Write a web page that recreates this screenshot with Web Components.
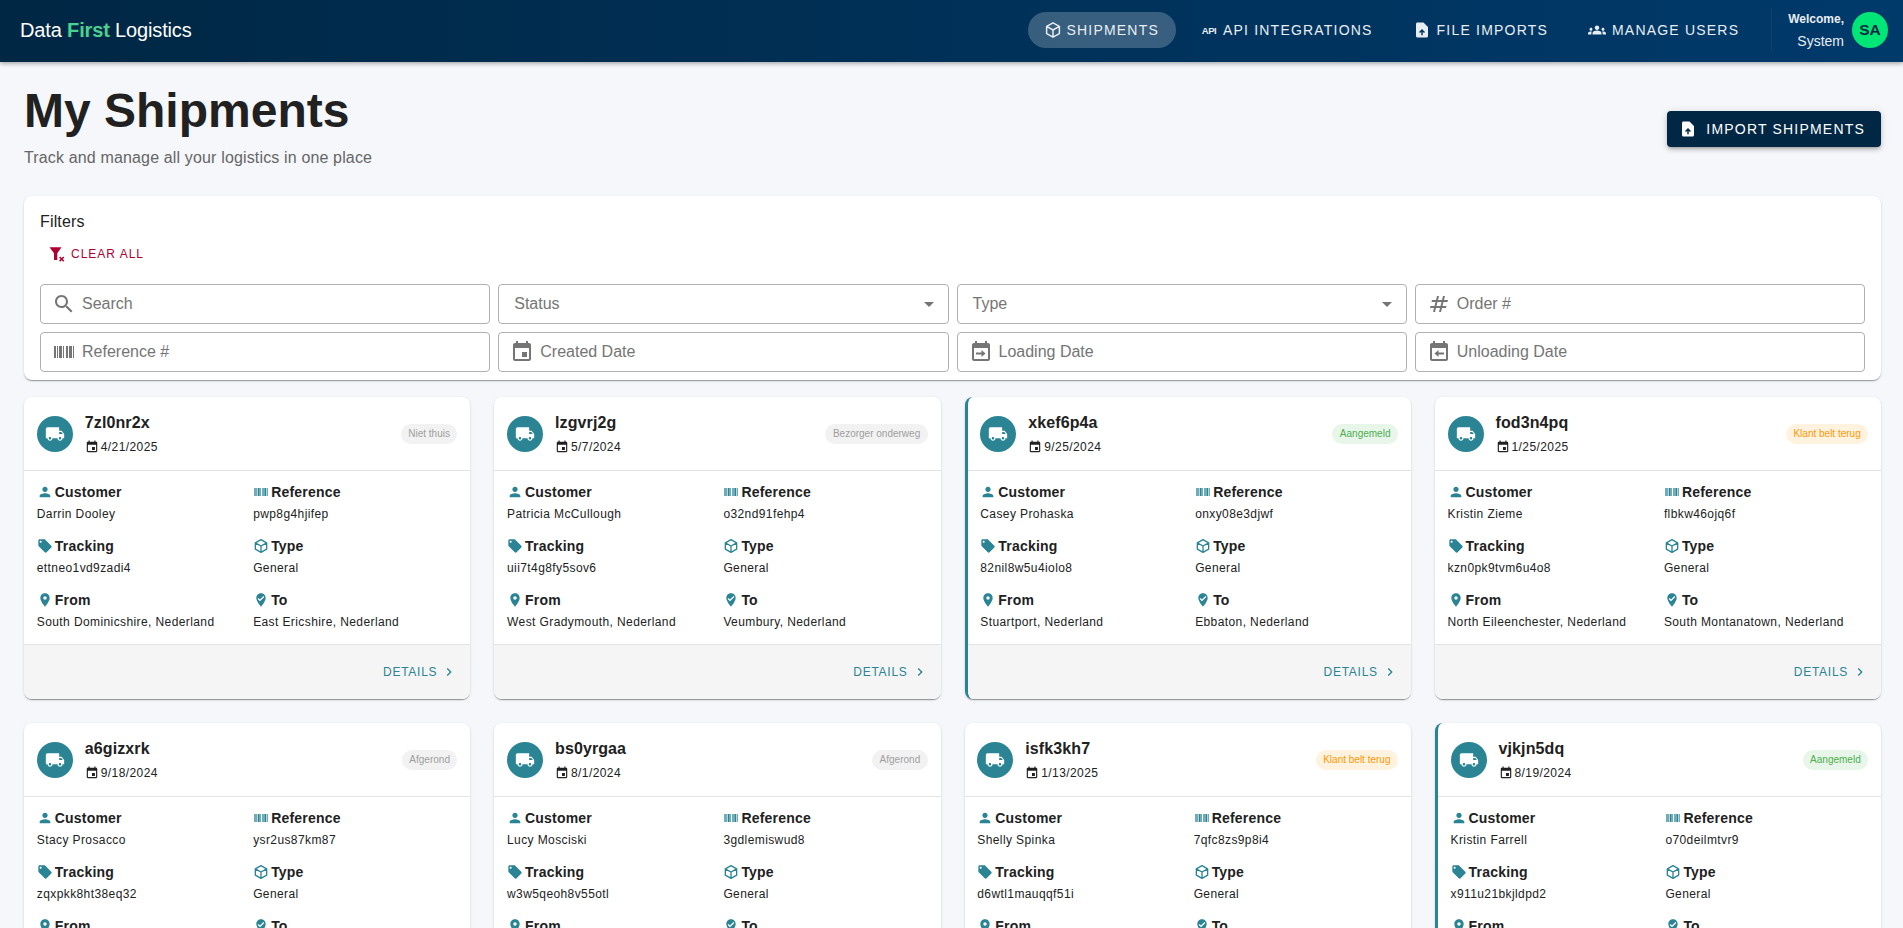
<!DOCTYPE html>
<html lang="en">
<head>
<meta charset="utf-8">
<title>My Shipments</title>
<style>
  html, body { margin: 0; height: 100%; overflow: hidden; }
  body { background: #f5f7fa; font-family: "Liberation Sans", Arial, sans-serif; }
  main { padding: 0 22px 0 24px; display: block; }
  .page-head { display: flex; justify-content: space-between; align-items: center; padding: 20px 0 26px; }
  .page-head import-button { margin-top: 6px; }
  .cards { display: grid; grid-template-columns: repeat(4, 1fr); gap: 24px; margin-top: 17px; }
</style>
</head>
<body>
<app-bar></app-bar>
<main>
  <div class="page-head">
    <page-title heading="My Shipments" sub="Track and manage all your logistics in one place"></page-title>
    <import-button>Import Shipments</import-button>
  </div>
  <filter-panel></filter-panel>
  <div class="cards" id="cards"></div>
</main>
<script>
const ICONS = {
  truck: '<path d="M20 8h-3V4H3c-1.1 0-2 .9-2 2v11h2c0 1.66 1.34 3 3 3s3-1.34 3-3h6c0 1.66 1.34 3 3 3s3-1.34 3-3h2v-5zM6 18.5c-.83 0-1.5-.67-1.5-1.5s.67-1.5 1.5-1.5 1.5.67 1.5 1.5-.67 1.5-1.5 1.5zm13.5-9 1.96 2.5H17V9.5zM18 18.5c-.83 0-1.5-.67-1.5-1.5s.67-1.5 1.5-1.5 1.5.67 1.5 1.5-.67 1.5-1.5 1.5z"/>',
  event: '<path d="M17 12h-5v5h5v-5zM16 1v2H8V1H6v2H5c-1.11 0-1.99.9-1.99 2L3 19c0 1.1.89 2 2 2h14c1.1 0 2-.9 2-2V5c0-1.1-.9-2-2-2h-1V1h-2zm3 18H5V8h14v11z"/>',
  person: '<path d="M12 12c2.21 0 4-1.79 4-4s-1.79-4-4-4-4 1.79-4 4 1.79 4 4 4zm0 2c-2.67 0-8 1.34-8 4v2h16v-2c0-2.66-5.33-4-8-4z"/>',
  barcode: '<path d="M2 6h2v12H2zm3 0h1v12H5zm2 0h3v12H7zm4 0h1v12h-1zm3 0h2v12h-2zm3 0h3v12h-3zm4 0h1v12h-1z"/>',
  tag: '<path d="M21.41 11.58l-9-9C12.05 2.22 11.55 2 11 2H4c-1.1 0-2 .9-2 2v7c0 .55.22 1.05.59 1.42l9 9c.36.36.86.58 1.41.58.55 0 1.05-.22 1.41-.59l7-7c.37-.36.59-.86.59-1.41 0-.55-.23-1.06-.59-1.42zM5.5 7C4.67 7 4 6.33 4 5.5S4.67 4 5.5 4 7 4.67 7 5.5 6.33 7 5.5 7z"/>',
  box: '<path fill="none" stroke="currentColor" stroke-width="2" stroke-linejoin="round" d="M12 2.5l8.5 4.75v9.5L12 21.5l-8.5-4.75v-9.5zM3.5 7.25L12 12l8.5-4.75M12 12v9.5"/>',
  place: '<path d="M12 2C8.13 2 5 5.13 5 9c0 5.25 7 13 7 13s7-7.75 7-13c0-3.87-3.13-7-7-7zm0 9.5c-1.38 0-2.5-1.12-2.5-2.5s1.12-2.5 2.5-2.5 2.5 1.12 2.5 2.5-1.12 2.5-2.5 2.5z"/>',
  vote: '<path d="M12 2c3.86 0 7 3.14 7 7 0 5.25-7 13-7 13S5 14.25 5 9c0-3.86 3.14-7 7-7zm-1.53 12L17 7.41 15.6 6l-5.13 5.18L8.4 9.09 7 10.5l3.47 3.5z"/>',
  chevron: '<path d="M10 6L8.59 7.41 13.17 12l-4.58 4.59L10 18l6-6z"/>',
  search: '<path d="M15.5 14h-.79l-.28-.27C15.41 12.59 16 11.11 16 9.5 16 5.91 13.09 3 9.5 3S3 5.91 3 9.5 5.91 16 9.5 16c1.61 0 3.09-.59 4.23-1.57l.27.28v.79l5 4.99L20.49 19l-4.99-5zm-6 0C7.01 14 5 11.99 5 9.5S7.01 5 9.5 5 14 7.01 14 9.5 11.99 14 9.5 14z"/>',
  numbers: '<path d="M20.5 10l.5-2h-4l1-4h-2l-1 4h-4l1-4h-2L9 8H5l-.5 2h4l-1 4h-4L3 16h4l-1 4h2l1-4h4l-1 4h2l1-4h4l.5-2h-4l1-4h4zm-7 4h-4l1-4h4l-1 4z"/>',
  fileup: '<path fill-rule="evenodd" d="M14 2H6c-1.1 0-2 .9-2 2v16c0 1.1.9 2 2 2h12c1.1 0 2-.9 2-2V8l-6-6zM12 10.5l-4 4 1.41 1.41L11 14.33V19h2v-4.67l1.59 1.58L16 14.5z"/>',
  groups: '<path d="M12 12.75c1.63 0 3.07.39 4.24.9 1.08.48 1.76 1.56 1.76 2.73V18H6v-1.61c0-1.18.68-2.26 1.76-2.73 1.17-.52 2.61-.91 4.24-.91zM4 13c1.1 0 2-.9 2-2s-.9-2-2-2-2 .9-2 2 .9 2 2 2zm1.13 1.1c-.37-.06-.74-.1-1.13-.1-.99 0-1.93.21-2.78.58C.48 14.9 0 15.62 0 16.43V18h4.5v-1.61c0-.83.23-1.61.63-2.29zM20 13c1.1 0 2-.9 2-2s-.9-2-2-2-2 .9-2 2 .9 2 2 2zm4 3.43c0-.81-.48-1.53-1.22-1.85-.85-.37-1.79-.58-2.78-.58-.39 0-.76.04-1.13.1.4.68.63 1.46.63 2.29V18H24v-1.57zM12 6c1.66 0 3 1.34 3 3s-1.34 3-3 3-3-1.34-3-3 1.34-3 3-3z"/>',
  funnelx: '<path d="M2 3h16l-5.6 8v9H8v-9z"/><path fill="none" stroke="currentColor" stroke-width="2" d="M15.5 16l5.5 5.5m0-5.5l-5.5 5.5"/>',
  calIn: '<path d="M19 3h-1V1h-2v2H8V1H6v2H5c-1.1 0-2 .9-2 2v14c0 1.1.9 2 2 2h14c1.1 0 2-.9 2-2V5c0-1.1-.9-2-2-2zm0 16H5V8h14v11z"/><path d="M7 12.5h5.5V10l4 3.5-4 3.5v-2.5H7z"/>',
  calOut: '<path d="M19 3h-1V1h-2v2H8V1H6v2H5c-1.1 0-2 .9-2 2v14c0 1.1.9 2 2 2h14c1.1 0 2-.9 2-2V5c0-1.1-.9-2-2-2zm0 16H5V8h14v11z"/><path d="M17 12.5h-5.5V10l-4 3.5 4 3.5v-2.5H17z"/>',
  caret: '<path d="M7 10l5 5 5-5z"/>'
};
const svg = (name, size, color) => `<svg width="${size}" height="${size}" viewBox="0 0 24 24" fill="${color || 'currentColor'}" style="flex:none;color:${color || 'currentColor'}">${ICONS[name]}</svg>`;

class AppBar extends HTMLElement {
  constructor() {
    super();
    this.attachShadow({ mode: "open" });
    const links = [["box", "Shipments", true], ["api", "API Integrations"], ["fileup", "File Imports"], ["groups", "Manage Users"]];
    this.shadowRoot.innerHTML = `
    <style>
      :host { display: flex; align-items: center; height: 62px; padding: 0 15px 2px 20px; box-sizing: border-box;
        background: linear-gradient(90deg, #002744, #003a6b); color: #fff; box-shadow: 0 2px 4px rgba(0,0,0,.3); position: relative; }
      .logo { font: 20px "Liberation Sans", sans-serif; letter-spacing: -.15px; flex: 1; }
      .logo b { color: #4cd08f; font-weight: 700; }
      nav { display: flex; gap: 8px; align-items: center; }
      a { display: flex; align-items: center; gap: 6px; height: 36px; padding: 0 16px; border-radius: 20px;
        font: 14px "Liberation Sans", sans-serif; letter-spacing: 1.2px; text-transform: uppercase; color: #e8edf2; }
      a.on { background: rgba(255,255,255,.22); gap: 4px; padding-right: 17px; margin-right: 1px; }
      .api { font: 700 9.5px "Liberation Sans", sans-serif; letter-spacing: -.5px; width: 16px; text-align: center; text-transform: none; }
      .user { display: flex; align-items: center; gap: 8px; margin-left: 16px; padding-left: 16px; border-left: 1px solid rgba(255,255,255,.05); text-align: right; }
      .user .w { font: 700 12px/22px "Liberation Sans", sans-serif; color: #e8edf2; display: block; }
      .user .s { font: 14px/22px "Liberation Sans", sans-serif; color: #e8edf2; display: block; }
      .av { width: 36px; height: 36px; border-radius: 50%; background: #00e676; color: #002744;
        display: flex; align-items: center; justify-content: center; font: 700 15.5px "Liberation Sans", sans-serif; }
    </style>
    <div class="logo">Data <b>First</b> Logistics</div>
    <nav>${links.map(([i, t, on]) => `<a class="${on ? "on" : ""}">${i === "api" ? '<span class="api">API</span>' : svg(i, 18)}${t}</a>`).join("")}</nav>
    <div class="user"><div><span class="w">Welcome,</span><span class="s">System</span></div><div class="av">SA</div></div>`;
  }
}
customElements.define("app-bar", AppBar);

class PageTitle extends HTMLElement {
  constructor() {
    super();
    this.attachShadow({ mode: "open" });
    this.shadowRoot.innerHTML = `
    <style>
      :host { display: block; }
      h1 { margin: 0; font: 700 48px/58px "Liberation Sans", sans-serif; color: #212121; }
      p { margin: 6px 0 0; font: 16px/24px "Liberation Sans", sans-serif; letter-spacing: .15px; color: #666; }
    </style>
    <h1>${this.getAttribute("heading")}</h1><p>${this.getAttribute("sub")}</p>`;
  }
}
customElements.define("page-title", PageTitle);

class ImportButton extends HTMLElement {
  constructor() {
    super();
    this.attachShadow({ mode: "open" });
    this.shadowRoot.innerHTML = `
    <style>
      :host { display: inline-flex; align-items: center; gap: 9px; height: 36px; padding: 0 16px 0 12px; border-radius: 4px;
        background: #002744; color: #fff; font: 14px "Liberation Sans", sans-serif; letter-spacing: 1.2px; text-transform: uppercase;
        box-shadow: 0 3px 3px -2px rgba(0,0,0,.2), 0 3px 4px rgba(0,0,0,.14), 0 1px 8px rgba(0,0,0,.12); }
    </style>${svg("fileup", 18)}<slot></slot>`;
  }
}
customElements.define("import-button", ImportButton);

class FilterField extends HTMLElement {
  constructor() {
    super();
    this.attachShadow({ mode: "open" });
    const icon = this.getAttribute("icon");
    this.shadowRoot.innerHTML = `
    <style>
      :host { display: flex; align-items: center; gap: 6px; height: 40px; box-sizing: border-box; padding: 0 14px 0 11px;
        border: 1px solid #b0b0b0; border-radius: 4px; background: #fff; color: #757575; font: 16px "Liberation Sans", sans-serif; }
      :host([select]) { padding-left: 15px; padding-right: 7px; }
      .t { flex: 1; }
    </style>
    ${icon ? svg(icon, 24) : ""}<span class="t">${this.getAttribute("label")}</span>
    ${this.hasAttribute("select") ? svg("caret", 24) : ""}`;
  }
}
customElements.define("filter-field", FilterField);

class FilterPanel extends HTMLElement {
  constructor() {
    super();
    this.attachShadow({ mode: "open" });
    this.shadowRoot.innerHTML = `
    <style>
      :host { display: block; background: #fff; border-radius: 8px; padding: 14px 16px 8px; box-shadow: 0 2px 1px -1px rgba(0,0,0,.2), 0 1px 1px rgba(0,0,0,.14), 0 1px 3px rgba(0,0,0,.12); }
      h6 { margin: 0; font: 16px/24px "Liberation Sans", sans-serif; letter-spacing: .15px; color: #212121; }
      .clear { display: flex; align-items: center; gap: 5px; margin: 4px 0 14px 8px; height: 32px; color: #b00030;
        font: 12px "Liberation Sans", sans-serif; letter-spacing: 1px; text-transform: uppercase; }
      .grid { display: grid; grid-template-columns: repeat(4, 1fr); gap: 8px; }
    </style>
    <h6>Filters</h6>
    <div class="clear">${svg("funnelx", 18)}Clear All</div>
    <div class="grid">
      <filter-field icon="search" label="Search"></filter-field>
      <filter-field select label="Status"></filter-field>
      <filter-field select label="Type"></filter-field>
      <filter-field icon="numbers" label="Order #"></filter-field>
      <filter-field icon="barcode" label="Reference #"></filter-field>
      <filter-field icon="event" label="Created Date"></filter-field>
      <filter-field icon="calIn" label="Loading Date"></filter-field>
      <filter-field icon="calOut" label="Unloading Date"></filter-field>
    </div>`;
  }
}
customElements.define("filter-panel", FilterPanel);

const TEAL = "#2a8494";
const STATUS = {
  grey: "background:#f2f2f2;color:#9e9e9e",
  green: "background:#e8f5e9;color:#4caf50",
  orange: "background:#fff3e0;color:#ff9800"
};

class ShipmentCard extends HTMLElement {
  set data(d) {
    const item = (icon, label, value) => `<div class="item"><div class="lab">${svg(icon, 16, TEAL)}${label}</div><div class="val">${value || ""}</div></div>`;
    this.attachShadow({ mode: "open" });
    this.shadowRoot.innerHTML = `
    <style>
      :host { display: block; background: #fff; border-radius: 8px; overflow: hidden; box-sizing: border-box; height: 302px;
        box-shadow: 0 2px 1px -1px rgba(0,0,0,.25), 0 1px 1px rgba(0,0,0,.14), 0 1px 3px rgba(0,0,0,.12); }
      :host([accent]) { border-left: 3px solid ${TEAL}; }
      .head { display: flex; align-items: center; gap: 12px; height: 73px; padding: 0 12.8px; border-bottom: 1px solid #e3e3e3; }
      .ava { width: 36px; height: 36px; border-radius: 50%; background: ${TEAL}; color: #fff; display: flex; align-items: center; justify-content: center; }
      .id { font: 700 16px/24px "Liberation Sans", sans-serif; letter-spacing: .1px; color: #212121; }
      .date { display: flex; align-items: center; gap: 2px; font: 12px/18px "Liberation Sans", sans-serif; letter-spacing: .4px; color: #212121; margin-top: 3px; }
      .grow { flex: 1; }
      .chip { height: 20px; padding: 0 7.5px; border-radius: 10px; font: 10px/20px "Liberation Sans", sans-serif; }
      .body { display: grid; grid-template-columns: 1fr 1fr; padding: 11px 12.8px 0; column-gap: 12px; row-gap: 13px; height: 174px; box-sizing: border-box; border-bottom: 1px solid #e3e3e3; align-content: start; }
      .lab { display: flex; align-items: center; gap: 2px; font: 700 14px/20px "Liberation Sans", sans-serif; letter-spacing: .2px; color: #212121; }
      .val { height: 18px; font: 12px/18px "Liberation Sans", sans-serif; letter-spacing: .4px; color: #212121; margin-top: 3px; }
      .foot { background: #f5f5f5; height: 54px; display: flex; align-items: center; justify-content: flex-end; gap: 4px; padding: 0 13px 0 12px;
        color: ${TEAL}; font: 12px "Liberation Sans", sans-serif; letter-spacing: .72px; text-transform: uppercase; }
    </style>
    <div class="head">
      <div class="ava">${svg("truck", 20)}</div>
      <div class="grow"><div class="id">${d.id}</div><div class="date">${svg("event", 14)}${d.date}</div></div>
      <div class="chip" style="${STATUS[d.kind]}">${d.status}</div>
    </div>
    <div class="body">
      ${item("person", "Customer", d.customer)}${item("barcode", "Reference", d.ref)}
      ${item("tag", "Tracking", d.tracking)}${item("box", "Type", "General")}
      ${item("place", "From", d.from)}${item("vote", "To", d.to)}
    </div>
    <div class="foot">Details ${svg("chevron", 16)}</div>`;
  }
}
customElements.define("shipment-card", ShipmentCard);

const shipments = [
  { id: "7zl0nr2x", date: "4/21/2025", status: "Niet thuis", kind: "grey", customer: "Darrin Dooley", ref: "pwp8g4hjifep", tracking: "ettneo1vd9zadi4", from: "South Dominicshire, Nederland", to: "East Ericshire, Nederland" },
  { id: "lzgvrj2g", date: "5/7/2024", status: "Bezorger onderweg", kind: "grey", customer: "Patricia McCullough", ref: "o32nd91fehp4", tracking: "uii7t4g8fy5sov6", from: "West Gradymouth, Nederland", to: "Veumbury, Nederland" },
  { id: "xkef6p4a", date: "9/25/2024", status: "Aangemeld", kind: "green", accent: true, customer: "Casey Prohaska", ref: "onxy08e3djwf", tracking: "82nil8w5u4iolo8", from: "Stuartport, Nederland", to: "Ebbaton, Nederland" },
  { id: "fod3n4pq", date: "1/25/2025", status: "Klant belt terug", kind: "orange", customer: "Kristin Zieme", ref: "flbkw46ojq6f", tracking: "kzn0pk9tvm6u4o8", from: "North Eileenchester, Nederland", to: "South Montanatown, Nederland" },
  { id: "a6gizxrk", date: "9/18/2024", status: "Afgerond", kind: "grey", customer: "Stacy Prosacco", ref: "ysr2us87km87", tracking: "zqxpkk8ht38eq32" },
  { id: "bs0yrgaa", date: "8/1/2024", status: "Afgerond", kind: "grey", customer: "Lucy Mosciski", ref: "3gdlemiswud8", tracking: "w3w5qeoh8v55otl" },
  { id: "isfk3kh7", date: "1/13/2025", status: "Klant belt terug", kind: "orange", customer: "Shelly Spinka", ref: "7qfc8zs9p8i4", tracking: "d6wtl1mauqqf51i" },
  { id: "vjkjn5dq", date: "8/19/2024", status: "Aangemeld", kind: "green", accent: true, customer: "Kristin Farrell", ref: "o70deilmtvr9", tracking: "x911u21bkjldpd2" }
];
const host = document.getElementById("cards");
shipments.forEach(s => {
  const card = document.createElement("shipment-card");
  if (s.accent) card.setAttribute("accent", "");
  card.data = s;
  host.appendChild(card);
});
</script>
</body>
</html>
